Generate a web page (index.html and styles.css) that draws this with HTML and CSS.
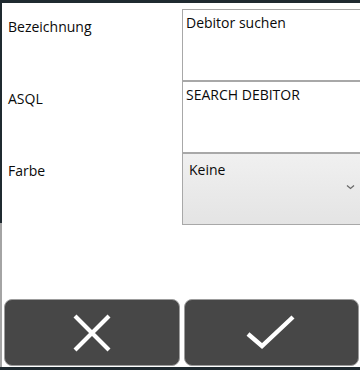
FILE: index.html
```html
<!DOCTYPE html>
<html lang="de">
<head>
    <meta charset="UTF-8">
    <meta name="viewport" content="width=device-width, initial-scale=1.0">
    <title>Suche bearbeiten</title>
    <link rel="stylesheet" href="styles.css">
</head>
<body>
    <div class="panel">
        <div class="form">
            <label class="label" for="bez">Bezeichnung</label>
            <div class="box" id="bez">Debitor suchen</div>

            <label class="label" for="asql">ASQL</label>
            <div class="box" id="asql">SEARCH DEBITOR</div>

            <label class="label" for="farbe">Farbe</label>
            <div class="box combo" id="farbe">
                <span>Keine</span>
                <svg class="chevron" width="9" height="6" viewBox="0 0 9 6">
                    <path d="M1 1.5 L4.5 4.5 L8 1.5" fill="none" stroke="#6a6a6a" stroke-width="1.3"/>
                </svg>
            </div>
        </div>

        <div class="actions">
            <button class="btn" title="Abbrechen">
                <svg width="40" height="38" viewBox="0 0 40 38">
                    <path d="M3 2 L37 36 M37 2 L3 36" stroke="#fff" stroke-width="4.2" fill="none"/>
                </svg>
            </button>
            <button class="btn" title="Speichern">
                <svg width="50" height="38" viewBox="0 0 50 38">
                    <path d="M2 20 L16 32 L47 3" stroke="#fff" stroke-width="4.4" fill="none"/>
                </svg>
            </button>
        </div>
    </div>
</body>
</html>
```

FILE: styles.css
```css
html, body {
    margin: 0;
    height: 370px;
    overflow: hidden;
}
body {
    font-family: "Open Sans", "Noto Sans", sans-serif;
    font-size: 14px;
    color: #0a0a0a;
    background: linear-gradient(#1f2a30 0 223px, #a4a4a4 223px 367px, #1f2a30 367px);
}
.panel {
    background: white;
    margin: 3px 0 0 2px;
    height: 364px;
    display: flex;
    flex-direction: column;
}
.form {
    display: grid;
    grid-template-columns: 180px 1fr;
    grid-auto-rows: 72px;
    padding-top: 6px;
}
.label {
    padding: 8px 0 0 6px;
}
.box {
    border: 1px solid #a8a8a8;
    border-right: none;
    padding: 3px 0 0 3px;
    margin-bottom: -1px;
    height: 100%;
    box-sizing: border-box;
}
.combo {
    background: linear-gradient(#f0f0f0, #e4e4e4);
    position: relative;
    padding: 6px 0 0 6px;
}
.chevron {
    position: absolute;
    right: 5px;
    top: 30px;
}
.actions {
    margin-top: auto;
    display: flex;
    gap: 4px;
    padding: 0 1px 1px 2px;
}
.btn {
    flex: 1;
    height: 67px;
    background: #474747;
    border: 1px solid #9c9c9c;
    border-radius: 8px;
    display: flex;
    align-items: center;
    justify-content: center;
    padding: 0;
    cursor: pointer;
}
```
